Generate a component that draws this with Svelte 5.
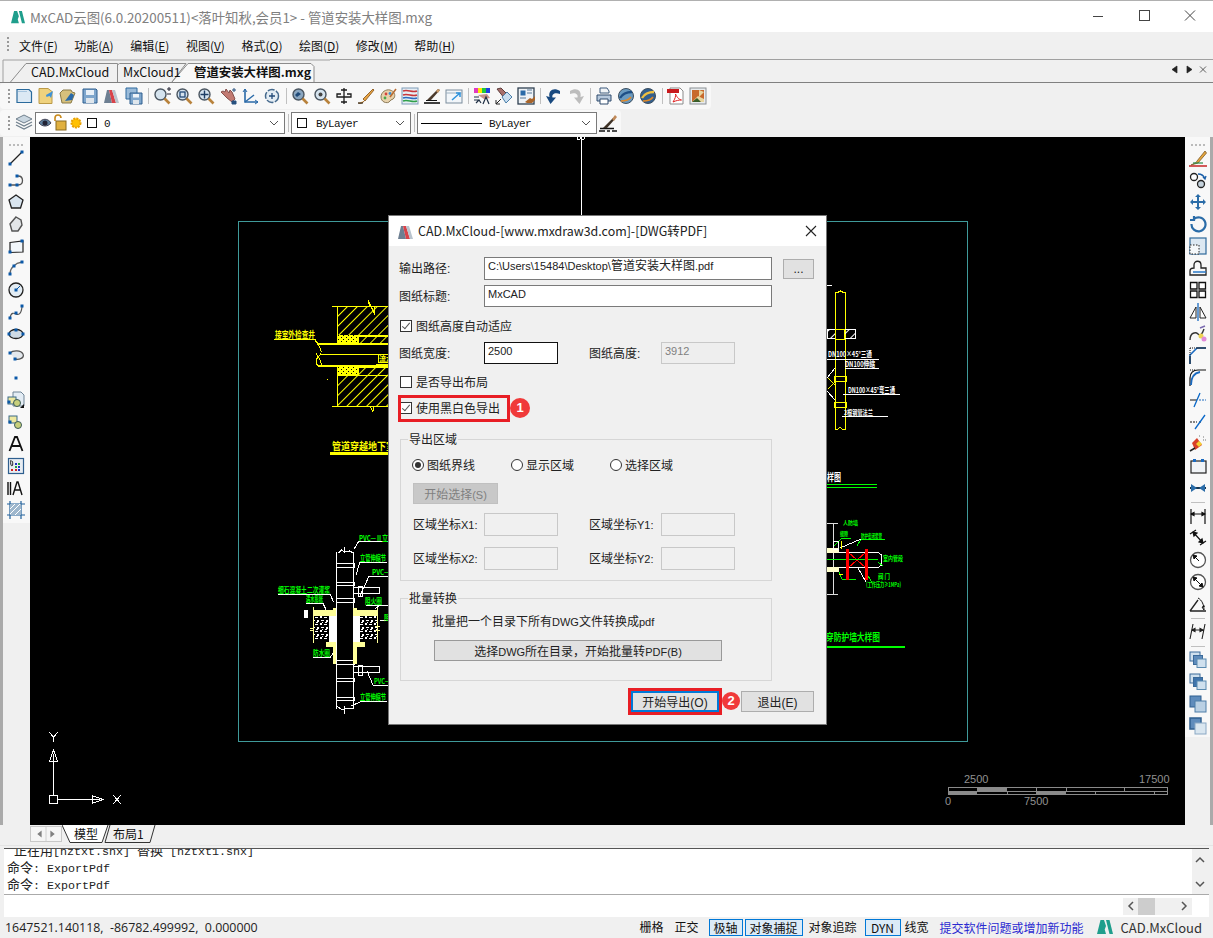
<script>
  const mag = (inner = '') => `<circle cx="7.5" cy="7.5" r="5.5" fill="#d5e3ee" stroke="#4a5560" stroke-width="1.4"/><path d="M11.5 11.5l5 5" stroke="#b8823c" stroke-width="2.6"/>${inner}`;
  const floppy = `<path d="M2 2h13l1 1v13H2z" fill="#7ea6cc" stroke="#2f5f8f"/><rect x="5" y="3" width="8" height="5" fill="#e8f0f7"/><rect x="5" y="11" width="8" height="5" fill="#dfe6ec"/>`;
  const ball = (a, b) => `<circle cx="9" cy="9" r="7.5" fill="${a}" stroke="#3d4f5f"/><path d="M3 11c3-5 8-6 12-6" stroke="${b}" stroke-width="2.4" fill="none"/><path d="M4 14c4 0 8-1 10-4" stroke="#e08a2a" stroke-width="1.6" fill="none"/>`;
  const dot = (x, y) => `<rect x="${x - 1.5}" y="${y - 1.5}" width="3" height="3" fill="#0a58a8"/>`;
  const mx = `<path d="M1 16L4 3h2l3 13z" fill="#6d7f92"/><path d="M6 3h3l4 13H9z" fill="#d8434a"/><path d="M9 3h3l4 13h-3z" fill="#b9c4ce"/>`;
  const top = [
    `<path d="M2 2.5h12l2.5 2.5v10.5H2z" fill="#dce9f4" stroke="#2a6a9c" stroke-width="1.2"/><path d="M3 4h9v1H3z" fill="#a8c6df"/>`,
    `<path d="M2 1.5h9l4 3v12H2z" fill="#efd27e" stroke="#bb9a48"/><path d="M9 8l7-4-2 7-1.5-2-3 1z" fill="#3f92d6"/>`,
    `<path d="M1 6l3-3h8l1 2 3 1-4 10H3z" fill="#d6c07c" stroke="#8a7a48"/><path d="M6 14l6-8 3 2-2 5z" fill="#2a6aa8"/>`,
    floppy, mx,
    `<path d="M1 1h11v11H1z" fill="#9abbd9" stroke="#2f6a9f"/><path d="M5 6h12v11H5z" fill="#7ea6cc" stroke="#2f5f8f"/><rect x="8" y="7" width="6" height="3.5" fill="#eef4f9"/><rect x="8" y="13" width="6" height="4" fill="#dfe6ec"/>`,
    'sep',
    mag(`<path d="M14 2h4M16 0v4M14 7h4" stroke="#223" stroke-width="1"/>`),
    mag(`<rect x="5" y="5" width="5" height="5" fill="none" stroke="#234a78" stroke-width="1.3"/>`),
    mag(`<path d="M7.5 3.5v8M3.5 7.5h8" stroke="#1d3d64" stroke-width="1.4"/>`),
    `<path d="M2 5l6 6 5 4 3-3-3-7-2-2-1 3-3-4-1 3-2-1z" fill="#c27a72" stroke="#84504c"/><path d="M15 1v4M13 3h4M13 14h4v3h-4z" stroke="#27507f" fill="#27507f"/>`,
    `<path d="M4 2v13h13" fill="none" stroke="#2a6aa8" stroke-width="1.6"/><path d="M4 15l9-7" stroke="#2a6aa8" stroke-width="1.4"/><path d="M2 5l2-3 2 3M14 13l3 2-3 2" fill="none" stroke="#2a6aa8"/>`,
    `<circle cx="9" cy="9" r="6.5" fill="#e3ecf3" stroke="#45698c" stroke-dasharray="7 1.5" stroke-width="1.5"/><path d="M6 9h6M9 6v6" stroke="#234a78" stroke-width="1.3"/>`,
    'sep',
    mag(`<path d="M4 8l3-3 3 2-4 3z" fill="#1f4a78"/>`).replace('#d5e3ee', '#8aa6c0'),
    mag(`<circle cx="7.5" cy="7.5" r="2" fill="#444"/>`),
    `<path d="M9 1v16M6 3h6M6 7H2v3h14V7h-4M6 15h6" fill="none" stroke="#1b1b1b" stroke-width="1.3"/>`,
    `<path d="M1 16c3 1 5 0 6-2M6 12L16 2l1 1L8 14z" fill="#e8a545" stroke="#8c5a20" stroke-width="0.9"/><path d="M1 16h5" stroke="#222"/>`,
    `<path d="M2 10c0-5 5-8 9-7 4 1 6 5 4 8-1 2-3 1-4 3s-4 2-6 1-3-3-3-5z" fill="#e7d2ac" stroke="#8c7a58"/><circle cx="7" cy="7" r="1.4" fill="#d6443c"/><circle cx="11" cy="6.5" r="1.4" fill="#3a8ed0"/><circle cx="6" cy="11" r="1.4" fill="#4aa84a"/><path d="M11 10l6-8" stroke="#b86a30" stroke-width="1.6"/>`,
    `<rect x="1" y="1" width="16" height="16" fill="#e6eef5" stroke="#7e9cb8"/><path d="M2 4c5-2 9 2 14 0M2 8c5-2 9 2 14 0" stroke="#c8363a" stroke-width="1.6" fill="none"/><path d="M2 11c5-2 9 2 14 0" stroke="#2a6ac0" stroke-width="1.6" fill="none"/><path d="M2 14c5-2 9 2 14 0" stroke="#2fa04a" stroke-width="1.6" fill="none"/>`,
    `<path d="M1 16h16" stroke="#111" stroke-width="1.6"/><path d="M3 13.5h11" stroke="#111"/><path d="M4 13L15 2l2 1-9 10z" fill="#4b3a2c"/><path d="M13 4l2-2 2 1-2 3z" fill="#c99a6a"/>`,
    `<rect x="1" y="3" width="16" height="13" fill="#f2f6fa" stroke="#7b8c9c"/><path d="M1 6h16" stroke="#9db0c0"/><path d="M7 13l8-7M11 6h4v4" fill="none" stroke="#2f93dc" stroke-width="1.5"/>`,
    'sep',
    `<rect x="1" y="1" width="16" height="5" fill="#e23ac0"/><rect x="5" y="1" width="4" height="5" fill="#ffe800"/><rect x="9" y="1" width="4" height="5" fill="#20c840"/><rect x="13" y="1" width="4" height="5" fill="#2040e0"/><path d="M5 8l9-1 3 4-6 1z" fill="#c99088"/><path d="M1 10h5M1 13h5M3 16l3-3 2 3M10 17l3-7 3 7" fill="none" stroke="#1f2f44" stroke-width="1.2"/>`,
    `<path d="M2 2l4-1 8 8-4 3z" fill="#a8706c" stroke="#5d3d3c"/><path d="M7 10l5-5 5 5-6 6z" fill="#c9def0" stroke="#4a7ea8"/><path d="M1 17l5-5M1 13v4h4" fill="none" stroke="#222"/>`,
    `<rect x="1" y="1" width="16" height="16" fill="#eef2f6" stroke="#2f3f50" stroke-width="1.3"/><rect x="3.5" y="3.5" width="5" height="5" fill="#2a6aa8"/><path d="M10 3h5M10 6h5M3 11h6" stroke="#5a7a9a"/><path d="M8 15l5-4 2 1 3-3v4l-3 3H10z" fill="#a8642a"/>`,
    'sep',
    `<path d="M15 4C9 0 3 3 4.500 10L1 9l4.500 8L11 10.500 7.500 10.500C6.500 7 10 5 15 7z" fill="#18497f"/>`,
    `<path d="M3 4c6-4 12-1 10.500 6L17 9l-4.500 8L7 10.500l3.500 0C11.500 7 8 5 3 7z" fill="#bdbdbd"/>`,
    'sep',
    `<path d="M5 1h7l2 3v2H5z" fill="#f0f3f6" stroke="#3d5a7c"/><path d="M2 8h14v6H2z" fill="#b6c8dc" stroke="#2f4a6c"/><path d="M5 12h8v5H5z" fill="#fff" stroke="#2f4a6c"/>`,
    ball('#6a9ac0', '#1e4f86'),
    ball('#335f8e', '#f0c040'),
    'sep',
    `<path d="M3 1h10l3 3v13H3z" fill="#fff" stroke="#8a8a8a"/><rect x="0" y="2" width="12" height="4" fill="#c8181c"/><path d="M6 15c2-3 3-6 2.5-8 2 4 3 5 6 6-3 0-5 .5-8.500 2z" fill="none" stroke="#e02020"/>`,
    `<rect x="1" y="1" width="16" height="16" fill="#e8ecef" stroke="#8a8f94"/><rect x="3" y="3" width="12" height="12" fill="#c86a2c"/><path d="M3 15l6-6 6 3v3zM10 3l5 2-5 5z" fill="#e8d6a0"/><path d="M3 15l5-4 4 4z" fill="#3a5f2a"/>`
  ];
  const left = [
    `<path d="M3 15L15 3" stroke="#222" stroke-width="1.2"/>${dot(3, 15)}${dot(15, 3)}`,
    `<path d="M3 14h8c6 0 6-9 0-9" fill="none" stroke="#555" stroke-width="1.3"/>${dot(3, 14)}${dot(10, 14)}${dot(10, 5)}`,
    `<path d="M9 2l7 5-2.500 8h-9L2 7z" fill="#d9e5ef" stroke="#222" stroke-width="1.3"/>`,
    `<path d="M9 2l5 3 1 5-4 6H5L3 9z" fill="#e3e6e8" stroke="#555" stroke-width="1.4"/>`,
    `<path d="M3 5.500l13-1.500v11l-13 .5z" fill="#f2f6fa" stroke="#222" stroke-width="1.2"/>${dot(3, 15)}${dot(15, 4)}`,
    `<path d="M3 15c0-6 5-11 12-12" fill="none" stroke="#666" stroke-width="1.3"/>${dot(3, 15)}${dot(7, 7)}${dot(15, 3)}`,
    `<circle cx="9" cy="9" r="7" fill="#e3ecf3" stroke="#222" stroke-width="1.3"/><path d="M9 9l4-4" stroke="#0a58a8"/>${dot(9, 9)}`,
    `<path d="M3 15c1-6 4-5 6-4s5 1 6-7" fill="none" stroke="#555" stroke-width="1.2"/>${dot(3, 15)}${dot(9, 10)}${dot(15, 3)}`,
    `<ellipse cx="9" cy="9" rx="7" ry="4.500" fill="#cfdbe5" stroke="#222" stroke-width="1.3"/>${dot(2, 9)}${dot(16, 9)}${dot(9, 5)}`,
    `<path d="M3 6c3-3 11-3 13 1s-4 6-8 5" fill="#e3e8ed" stroke="#555" stroke-width="1.3"/>${dot(3, 6)}${dot(8, 12)}`,
    `${dot(9, 9)}`,
    `<path d="M6 1h8l3 3v11H6z" fill="#e3ecf4" stroke="#6f8496"/><rect x="1" y="6" width="8" height="7" fill="#eee9a0" stroke="#3a6a88"/><circle cx="10" cy="12" r="3.500" fill="#c8d07c" stroke="#3a5a58"/><path d="M13 17h4v-4z" fill="#111"/>${dot(2, 11)}`,
    `<rect x="2" y="3" width="8" height="7" fill="#eee9a0" stroke="#3a6a88"/><circle cx="11" cy="12" r="3.500" fill="#c8d07c" stroke="#3a5a58"/>${dot(3, 9)}`,
    `<path d="M2.500 16L8 2h2l5.500 14M5 11h8" fill="none" stroke="#111" stroke-width="1.8"/>`,
    `<rect x="1.500" y="1.500" width="15" height="15" fill="#e8edf2" stroke="#2f5f8f" stroke-width="1.2"/><path d="M4 3c-1 3 0 6 1 6s1-4 0-5" fill="none" stroke="#222"/><rect x="8" y="6" width="2" height="2" fill="#2030c0"/><rect x="11" y="6" width="2" height="2" fill="#20a040"/><rect x="8" y="9" width="2" height="2" fill="#20a040"/><rect x="11" y="9" width="2" height="2" fill="#2030c0"/><rect x="4" y="12" width="2" height="2" fill="#d02020"/><rect x="8" y="12" width="2" height="2" fill="#d02020"/><rect x="11" y="12" width="2" height="2" fill="#2030c0"/>`,
    `<path d="M1 3v13M3.500 3v13M6 16l4-13h1l4 13M8 11h6" fill="none" stroke="#111" stroke-width="1.400"/>`,
    `<path d="M3 0v18M14 0v18M0 3h18M0 14h18" stroke="#1f5f9a" stroke-width="1.200"/><rect x="3" y="3" width="11" height="11" fill="#9db6cc"/><path d="M3 8l5-5M3 13l10-10M8 14l6-6" stroke="#fff"/>`
  ];
  const dash = (x1, y1, x2, y2) => `<path d="M${x1} ${y1}L${x2} ${y2}" stroke="#0a68c8" stroke-width="1.300"/>`;
  const stack = (a, b, c) => `<rect x="1" y="1" width="10" height="9" fill="${a}" stroke="#3a6a9a"/><rect x="4.500" y="4.500" width="9" height="9" fill="${b}" stroke="#3a6a9a"/><rect x="8" y="8" width="9" height="8.500" fill="${c}" stroke="#5a8ab0"/>`;
  const right = [
    `<path d="M2 16c4-2 5-2 6-4L16 2l1.500 2L9 14z" fill="#e6a63c" stroke="#7a5a2a" stroke-width="0.800"/><path d="M0 17h18" stroke="#c83030" stroke-width="1.600"/><path d="M4 14h10" stroke="#2a8a4a" stroke-width="1.200"/>`,
    `<circle cx="5" cy="6" r="3.500" fill="#fff" stroke="#222" stroke-width="1.300"/><circle cx="12" cy="13" r="3.500" fill="#c5d2dc" stroke="#222" stroke-width="1.300"/><path d="M9 3c4 0 6 2 7 5M14 6l2 2 1-3" fill="none" stroke="#1a5fa8" stroke-width="1.300"/>`,
    `<path d="M9 1l3 3h-2v4h4V6l3 3-3 3v-2h-4v4h2l-3 3-3-3h2v-4H4v2L1 9l3-3v2h4V4H6z" fill="#2a6ca8"/>`,
    `<path d="M5 4a7 7 0 1 1-2.500 5M5 1v4H1" fill="none" stroke="#2a6ca8" stroke-width="2.200"/>`,
    `<rect x="1" y="1" width="16" height="16" fill="#dce8f2" stroke="#2f6a9c" stroke-width="1.200"/><rect x="1" y="8" width="9" height="9" fill="#f5f8fa" stroke="#222" stroke-dasharray="1.500 1.500"/>`,
    `<path d="M1 16v-4c0-3 3-3 4-3V6c0-5 7-5 7 0v3h5v7z" fill="none" stroke="#222" stroke-width="1.300"/><path d="M4 13h13" stroke="#2a7ac8" stroke-width="1.500"/>`,
    `<path d="M1.500 1.500h6.500v6.500H1.500zM10 1.500h6.500v6.500H10zM1.500 10h6.500v6.500H1.500zM10 10h6.500v6.500H10z" fill="#fff" stroke="#111" stroke-width="1.300"/>`,
    `<path d="M9 0v18" stroke="#1a6ac0" stroke-width="1.300"/><path d="M7 4v11H1zM11 4v11h6z" fill="#fff" stroke="#222"/>`,
    `<path d="M1 15c0-8 6-8 8-6s4 1 6-5" fill="none" stroke="#333" stroke-width="1.400"/><circle cx="12" cy="11" r="2.500" fill="#ecd250"/><circle cx="15" cy="14" r="2.500" fill="#e08ad8"/><path d="M11 3l5-2" stroke="#7a6ab0" stroke-width="1.400"/>`,
    `<path d="M1 17V8l7-7h9" fill="none" stroke="#1a6ac0" stroke-width="1.600"/><path d="M1 1h7M1 1v7" stroke="#111" stroke-dasharray="1 1"/><path d="M1 17v-8" stroke="#111"/><path d="M8 1h9" stroke="#111"/>`,
    `<path d="M1 17V9c0-5 3-8 8-8h8" fill="none" stroke="#111" stroke-width="1.200"/><path d="M2 16c0-8 3-12 9-13" fill="none" stroke="#1a6ac0" stroke-width="1.800"/><path d="M1 1h6" stroke="#111" stroke-dasharray="1 1"/>`,
    `<path d="M1 9h7" stroke="#111"/>${dash(5, 16, 11, 2)}<path d="M10 9h7" stroke="#1a6ac0" stroke-dasharray="2 1"/>`,
    `<path d="M1 9h7M10 9h3" stroke="#111" stroke-dasharray="2 1"/>${dash(6, 16, 16, 2)}`,
    `<path d="M3 8l5-5 5 7-7 5z" fill="#d8402a"/><path d="M7 9l3-3 3 3-3 3z" fill="#f4d030"/><path d="M10 1h2M14 2h2M14 5h3" stroke="#777" stroke-dasharray="1 1"/><path d="M1 16l5-3" stroke="#222" stroke-width="1.500"/>`,
    `<rect x="2" y="4" width="15" height="12" fill="#f0f3f6" stroke="#222" stroke-width="1.200"/><rect x="4" y="2" width="3" height="3" fill="#1a6ac0"/><rect x="12" y="2" width="3" height="3" fill="#1a6ac0"/>`,
    `<path d="M1 9h16" stroke="#16354f" stroke-width="2"/><path d="M8 9L2 5v8zM10 9l6-4v8z" fill="#2a6ca8"/>`,
    'sep',
    `<path d="M2 2v15M16 2v15M2 7h14M2 7l3-1.500v3zM16 7l-3-1.500v3z" fill="#111" stroke="#111" stroke-width="1.200"/>`,
    `<path d="M1 5l6-4M11 16l6-4M4 3l10 11M4 3l1 4 3-3zM14 14l-1-4-3 3z" fill="#111" stroke="#111" stroke-width="1.200"/>`,
    `<circle cx="9" cy="9" r="7.500" fill="#fff" stroke="#555" stroke-width="1.300"/><path d="M4 4l6 6M4 4l1 4 3-3z" fill="#111" stroke="#111"/>`,
    `<circle cx="9" cy="9" r="7.500" fill="#fff" stroke="#555" stroke-width="1.300"/><path d="M4 4l10 10M4 4l1 4 3-3zM14 14l-1-4-3 3z" fill="#111" stroke="#111"/>`,
    `<path d="M1 16h16M1 16L9 5" fill="none" stroke="#222" stroke-width="1.300"/><path d="M9 3c4 2 6 7 6 12M15 15l-2-3 3-1" fill="none" stroke="#111"/>`,
    'sep',
    `<path d="M4 1L1 16M16 1l-3 15M3 7h11M3 7l3-1.500v3zM14 7l-3-1.500v3z" fill="#111" stroke="#222" stroke-width="1.100"/>`,
    'sep',
    stack('#cfe0ee', '#5f8cbc', '#cfe0ee'),
    stack('#cfe0ee', '#3f74ac', '#cfe0ee'),
    `<rect x="1" y="1" width="11" height="11" fill="#5f8cbc" stroke="#2f5f8f"/><rect x="6" y="6" width="11" height="11" fill="#b9d0e4" stroke="#4f7ea8"/>`,
    `<rect x="1" y="1" width="11" height="11" fill="#5f8cbc" stroke="#2f5f8f" stroke-width="1.500"/><rect x="6" y="6" width="11" height="11" fill="#d9e6f0" stroke="#8aa8c4"/>`
  ];
  const layerIcons = {
    layers: `<path d="M9 1l8 4-8 4-8-4z" fill="#c9d6e0" stroke="#6f7f8c"/><path d="M1 8l8 4 8-4M1 11l8 4 8-4" fill="none" stroke="#6f7f8c" stroke-width="1.200"/>`,
    brush: `<path d="M0 17h6M8 17h3M13 17h5M1 14.500h14" stroke="#111" stroke-width="1.300"/><path d="M4 14L14 4l2 1-8 9z" fill="#3f3226"/><path d="M13 5l3-4 2 2-3 4z" fill="#c08a5a"/>`
  };
  const logoPath = 'M0 15L3.500 1h3.500l2 6-3 8zM9 1h3.500L16 15h-3.500zM7 8l2 7H6z';
  const menus = [['文件', 'F'], ['功能', 'A'], ['编辑', 'E'], ['视图', 'V'], ['格式', 'O'], ['绘图', 'D'], ['修改', 'M'], ['帮助', 'H']];
  const status = [
    { t: '栅格', w: 34, m: 0 }, { t: '正交', w: 34, m: 1 }, { t: '极轴', w: 34, m: 5, on: true },
    { t: '对象捕捉', w: 58, m: 2, on: true }, { t: '对象追踪', w: 52, m: 4 }, { t: 'DYN', w: 36, m: 6, on: true }, { t: '线宽', w: 32, m: 0 }
  ];
  const cream = '#ffff99';
  const labels = [
    { c: 'cy', x: 275, y: 338, l: 40, s: 9, t: '接室外检查井' },
    { c: 'cy', x: 379, y: 362, l: 14, s: 8, t: '流水' },
    { c: 'cy', x: 332, y: 450, l: 63, s: 10, t: '管道穿越地下室' },
    { c: 'cg', x: 359, y: 541, l: 35, s: 7.5, t: 'PVC—Ⅱ立管' },
    { c: 'cg', x: 360, y: 561, l: 26, s: 8, t: '立管伸缩节' },
    { c: 'cg', x: 372, y: 575, l: 24, s: 7.5, t: 'PVC—Ⅱ' },
    { c: 'cg', x: 278, y: 593, l: 52, s: 7.5, t: '细石混凝土二次灌浆' },
    { c: 'cg', x: 306, y: 602, l: 17, s: 7.5, t: '遇水膨胀' },
    { c: 'cg', x: 365, y: 604, l: 17, s: 8, t: '阻火圈' },
    { c: 'cg', x: 384, y: 620, l: 6, s: 7, t: '阻' },
    { c: 'cg', x: 313, y: 656, l: 17, s: 8, t: '防水圈' },
    { c: 'cg', x: 374, y: 684, l: 16, s: 7, t: 'PVC—' },
    { c: 'cg', x: 360, y: 700, l: 26, s: 8, t: '立管伸缩节' },
    { c: 'cw', x: 828, y: 357, l: 44, s: 7.5, t: 'DN100×45°三通' },
    { c: 'cw', x: 845, y: 367, l: 30, s: 7.5, t: 'DN100伸缩' },
    { c: 'cw', x: 848, y: 393, l: 47, s: 8, t: 'DN100×45°弯三通' },
    { c: 'cw', x: 844, y: 415, l: 29, s: 6.5, t: '2根钢管法兰' },
    { c: 'cw', x: 827, y: 481, l: 14, s: 10, t: '样图' },
    { c: 'cg', x: 843, y: 525, l: 15, s: 6, t: '人防墙' },
    { c: 'cg', x: 840, y: 536, l: 8, s: 6, t: '缝隙' },
    { c: 'cg', x: 861, y: 538, l: 21, s: 6, t: '防护密闭套管' },
    { c: 'cg', x: 883, y: 561, l: 20, s: 7, t: '室内管段' },
    { c: 'cg', x: 878, y: 579, l: 12, s: 7, t: '阀 门' },
    { c: 'cg', x: 866, y: 587, l: 35, s: 6.5, t: '(工作压力≥1MPa)' },
    { c: 'cg', x: 826, y: 641, l: 54, s: 10, t: '穿防护墙大样图' }
  ];
</script>

<div class="win">
  <header class="titlebar">
    <svg class="logo" viewBox="0 0 16 16"><path d={logoPath} fill="#1f9e8c"/></svg>
    <span class="apptitle">MxCAD云图(6.0.20200511)&lt;落叶知秋,会员1&gt; - 管道安装大样图.mxg</span>
    <div class="winbtns">
      <svg viewBox="0 0 46 31"><path d="M18 15.500h10" stroke="#444"/></svg>
      <svg viewBox="0 0 46 31"><rect x="18.500" y="9.500" width="10" height="10" fill="none" stroke="#444"/></svg>
      <svg viewBox="0 0 46 31"><path d="M18 9.500l10 10M28 9.500l-10 10" stroke="#444"/></svg>
    </div>
  </header>

  <nav class="menubar">
    <span class="grip"></span>
    {#each menus as m}
      <span class="menu">{m[0]}(<u>{m[1]}</u>)</span>
    {/each}
  </nav>

  <div class="tabstrip">
    <svg class="tabshape" viewBox="0 0 330 24">
      <path d="M3 24V2H330" fill="none" stroke="#a0a0a0"/>
      <path d="M10.500 24L26 5.500H117.500V24" fill="#f0f0f0" stroke="#8c8c8c"/>
      <path d="M117.500 24V7l2-1.500H186L172 24" fill="#f0f0f0" stroke="#8c8c8c"/>
      <path d="M172 24L188 5.500H311l3 3V24" fill="#f8f8f8" stroke="#8c8c8c"/>
    </svg>
    <span class="tabtop"></span>
    <span class="tab t1">CAD.MxCloud</span>
    <span class="tab t2">MxCloud1</span>
    <span class="tab t3">管道安装大样图.mxg</span>
    <div class="tabnav">
      <svg viewBox="0 0 42 12"><path d="M9 2v7L4 5.500zM19 2v7l5-3.500zM32 2.500l6 6M38 2.500l-6 6" fill="#222" stroke="#222" stroke-width="0.700"/></svg>
    </div>
  </div>

  <div class="toolrow r1">
    <div class="bar">
      <span class="grip small"></span>
      {#each top as ic}
        {#if ic === 'sep'}<span class="vsep"></span>{:else}<svg class="ico" viewBox="0 0 18 18">{@html ic}</svg>{/if}
      {/each}
    </div>
  </div>
  <div class="toolrow r2">
    <div class="bar bar2">
      <span class="grip small"></span>
      <svg class="ico" viewBox="0 0 18 18">{@html layerIcons.layers}</svg>
      <div class="combo layer">
        <svg class="eye" viewBox="0 0 60 18">
          <path d="M1 9c3-5 9-5 12 0-3 4-9 4-12 0z" fill="#5d7f9c" stroke="#445"/><circle cx="7" cy="9" r="2.500" fill="#223"/>
          <path d="M17 7V4c0-4 6-4 6 0" fill="none" stroke="#c98a1c" stroke-width="1.600"/><rect x="18" y="7" width="10" height="9" fill="#e0b040" stroke="#8a6a20"/>
          <circle cx="38" cy="9" r="4.500" fill="#ffc000" stroke="#e8a000" stroke-width="2" stroke-dasharray="2 1"/>
          <rect x="49.500" y="4.500" width="9" height="9" fill="#fff" stroke="#111"/>
        </svg>
        <span class="combotext">0</span>
        <svg class="chev" viewBox="0 0 10 6"><path d="M1 1l4 4 4-4" fill="none" stroke="#555"/></svg>
      </div>
      <span class="vsep s2"></span>
      <div class="combo bylayer">
        <svg class="sw" viewBox="0 0 10 10"><rect x=".5" y=".5" width="9" height="9" fill="#fff" stroke="#111"/></svg>
        <span class="combotext">ByLayer</span>
        <svg class="chev" viewBox="0 0 10 6"><path d="M1 1l4 4 4-4" fill="none" stroke="#555"/></svg>
      </div>
      <span class="vsep s2"></span>
      <div class="combo linetype">
        <span class="ln"></span>
        <span class="combotext">ByLayer</span>
        <svg class="chev" viewBox="0 0 10 6"><path d="M1 1l4 4 4-4" fill="none" stroke="#555"/></svg>
      </div>
      <svg class="ico" viewBox="0 0 18 18">{@html layerIcons.brush}</svg>
    </div>
  </div>

  <div class="workarea">
    <aside class="vbar vleft">
      <span class="hgrip"></span>
      {#each left as ic}<svg class="ico" viewBox="0 0 18 18">{@html ic}</svg>{/each}
    </aside>

    <main class="canvas">
      <svg class="cad" viewBox="30 137 1155 688" aria-hidden="true">
        <defs>
          <pattern id="hy" width="7" height="7" patternUnits="userSpaceOnUse" patternTransform="rotate(45)"><path d="M0 0V7" stroke="#ff0" stroke-width="1.200"/></pattern>
          <pattern id="hw" width="7" height="7" patternUnits="userSpaceOnUse" patternTransform="rotate(45)"><path d="M0 0V7" stroke="#fff" stroke-width="1.200"/></pattern>
          <pattern id="speck" width="9" height="7" patternUnits="userSpaceOnUse"><path d="M0 1h3v1H0zM5 0h2v2H5zM2 4h2v2H2zM6 4h3v1H6zM1 6h2v1H1zM7 6h1v1H7z" fill="#fff"/></pattern>
          <pattern id="ydot" width="5" height="4" patternUnits="userSpaceOnUse"><rect width="5" height="4" fill="#ff0"/><rect x="1" y="1" width="1" height="1"/><rect x="3" y="3" width="1" height="1"/></pattern>
        </defs>
        <rect x="238.500" y="221.500" width="729" height="520" fill="none" stroke="#3f9a9a"/>
        <path d="M581.500 137v80" stroke="#fff"/>
        <circle cx="579" cy="138" r="1.500" fill="none" stroke="#fff"/><circle cx="583" cy="138" r="1.500" fill="none" stroke="#fff"/>

        <!-- upper-left section -->
        <g fill="none" stroke="#ff0">
          <path d="M332 306.500h38l-2-6 7 14-1 -8h15M332 406.500h38l3 5 1-5h15" />
          <rect x="337.500" y="306.500" width="52" height="29" fill="url(#hy)"/>
          <rect x="337.500" y="375.500" width="52" height="31" fill="url(#hy)"/>
          <rect x="358" y="336" width="32" height="8" fill="url(#hy)"/>
          <rect x="358" y="367" width="32" height="8" fill="url(#hy)"/>
          <rect x="337" y="335" width="21" height="9" fill="url(#ydot)" stroke="none"/>
          <rect x="337" y="367" width="21" height="8" fill="url(#ydot)" stroke="none"/>
          <path d="M318 343.500h72" stroke-width="2"/><path d="M318 365.500h72" stroke-width="2"/><path d="M320 354.500h70"/>
          <path d="M315 340c4 6 7 9 6 13s-5 4-5 8 4 8 5 4-3-8-5-12" />
          <path d="M274 339.500h41l3 4"/>
          <path d="M378 354v8h12M376 364h14" />
          <path d="M330 453.500h60" stroke-width="2.500"/>
        </g>
        <rect x="327" y="379" width="1" height="1" fill="#ff0"/>

        <!-- lower-left section -->
        <g fill="none" stroke="#fff">
          <path d="M336.500 552v157M353.500 552v157M338.500 553l3-3 3 2 5-1 4 2M337 706l5 4 5-2 7 1" />
          <path d="M336 563.500h18v4h-18zM336 582.500h18v3h-18zM336 598.500h18v4h-18zM336 660.500h18v4h-18zM336 678.500h18v3h-18zM336 697.500h18v3h-18z"/>
          <path d="M344 547v6M344 706v8M353 587.500h26v6h-26M358 586h4v10h-4zM353 666.500h26v6h-26M358 665h4v10h-4z"/>
        </g>
        <rect x="313" y="610" width="22" height="6" fill={cream}/><rect x="354" y="610" width="24" height="6" fill={cream}/>
        <rect x="333" y="608" width="3" height="56" fill={cream}/><rect x="353" y="608" width="4" height="56" fill={cream}/>
        <rect x="326" y="642" width="10" height="5" fill={cream}/><rect x="353" y="642" width="12" height="5" fill={cream}/>
        <rect x="329" y="616" width="7" height="26" fill="#fff"/><rect x="353" y="616" width="7" height="26" fill="#fff"/>
        <rect x="313" y="616" width="16" height="25" fill="url(#speck)"/><rect x="360" y="616" width="18" height="25" fill="url(#speck)"/>
        <rect x="304" y="610" width="4" height="8" fill="#fff"/>
        <path d="M313.500 607v36M377.500 607v36" stroke="#ff9" fill="none"/>
        <path d="M310 629l4-1M310 630l4 1M375 627l5-1M375 630l5 1" stroke="#ff9" fill="none"/>
        <g fill="none" stroke="#fff">
          <path d="M354 549l5-8h30M356 575l4-13h27M360 596l9-20h20M277.500 594.500h53l3 8M306 603.500h17l3 6M366 605.500h22l-8 0-5 3M380 620h9M313 657.500h17l3-4M367 671l6 14h16M360 701.500h27l-6 0M351 706l9-4"/>
        </g>

        <!-- upper-right section -->
        <g fill="none" stroke="#ff0">
          <path d="M835.500 292h3l2-1 2 1h2.500v137h-3l-2-2-2 2h-2.500z"/>
          <path d="M834 376.500h12v5h-12zM834 402.500h12v5h-12z"/>
          <path d="M828 389l7-7M828 378l7 7" />
        </g>
        <rect x="827" y="329.500" width="28" height="9" fill="url(#hw)" stroke="#fff"/>
        <rect x="835.500" y="329" width="9" height="10" fill="#000" stroke="#ff0"/>
        <path d="M827 285h5M827 359.500h52M845 368.500h34M843 394.500h57M842 416.500h46M827 378l8-10M827 391l8 9" stroke="#fff" fill="none"/>
        <path d="M827 484.500h50M827 487.500h50" stroke="#0f0" fill="none"/>

        <!-- lower-right section -->
        <path d="M827 523.500h11M833.500 524v70M827 594.500h11" stroke="#ddd" fill="none"/>
        <path d="M827 552.500h51l3 2v11l-3 2h-51" stroke="#fff" fill="none"/>
        <path d="M866 552l-18 16M848 552l18 16" stroke="#f00" fill="none"/>
        <path d="M827 559.500h51M883 566l-5-4M834 546l8-8h9M838 570l4 9h14M860 539.500h25M857 546l4-7M866 572l6 11" stroke="#0f0" fill="none"/>
        <path d="M840 548l21-9M858 568l8 14" stroke="#fff" fill="none"/>
        <rect x="846" y="549" width="3" height="31" fill="#f00"/><rect x="865" y="549" width="3" height="31" fill="#f00"/>
        <rect x="827" y="548" width="12" height="5" fill="#ffc"/><rect x="827" y="567" width="12" height="5" fill="#ffc"/>
        <rect x="833" y="541" width="5" height="8" fill="none" stroke="#fff"/>
        <path d="M841 541v8M839 574h4" stroke="#ff0"/>
        <path d="M827 646.500h78" stroke="#0f0" stroke-width="2" fill="none"/>

        {#each labels as b}
          <text class={b.c} x={b.x} y={b.y} font-size={b.s} textLength={b.l} lengthAdjust="spacingAndGlyphs">{b.t}</text>
        {/each}

        <!-- UCS -->
        <g fill="none" stroke="#fff">
          <rect x="49.500" y="795.500" width="8" height="8"/>
          <path d="M53.500 795V757M53.500 750l-4 11h8zM53.500 754v7M58 799.500h35M103 799.500l-11-4v8zM92 799.500h8"/>
          <path d="M49 732l4.500 5 4.500-5M53.500 737v5M113 795l8 9M121 795l-8 9"/>
        </g>

        <!-- scale -->
        <g fill="none" stroke="#8a8a8a">
          <rect x="948.500" y="787.500" width="219" height="7"/>
          <path d="M948 791h220M977 787v4M1007 791v4M1036 787v8M1066 787v4M1095 791v4M1124 787v4M1154 791v4" />
        </g>
        <rect x="977" y="787" width="30" height="4" fill="#8a8a8a"/><rect x="948" y="791" width="29" height="4" fill="#8a8a8a"/><rect x="1036" y="791" width="30" height="4" fill="#8a8a8a"/>
        <g class="cgray">
          <text x="964" y="783">2500</text><text x="1139" y="783">17500</text>
          <text x="945" y="805">0</text><text x="1024" y="805">7500</text>
        </g>
      </svg>

      <section class="dialog">
        <div class="dtitle">
          <svg class="dlogo" viewBox="0 0 16 16">{@html mx}</svg>
          <span>CAD.MxCloud-[www.mxdraw3d.com]-[DWG转PDF]</span>
          <svg class="dclose" viewBox="0 0 12 12"><path d="M1 1l10 10M11 1L1 11" stroke="#222" stroke-width="1.100"/></svg>
        </div>
        <div class="dbody">
          <div class="row r-path">
            <span class="lbl w85">输出路径:</span>
            <div class="input wide">C:\Users\15484\Desktop\<span class="zh12">管道安装大样图</span>.pdf</div>
            <button class="btn more">...</button>
          </div>
          <div class="row r-title">
            <span class="lbl w85">图纸标题:</span>
            <div class="input wide tall22">MxCAD</div>
          </div>
          <div class="check c1"><span class="box on"></span><span class="ct">图纸高度自动适应</span></div>
          <div class="row r-size">
            <span class="lbl w85">图纸宽度:</span>
            <div class="input w74 focus">2500</div>
            <span class="lbl lblgap">图纸高度:</span>
            <div class="input w74 dis">3912</div>
          </div>
          <div class="check c2"><span class="box"></span><span class="ct">是否导出布局</span></div>
          <div class="check c3">
            <span class="box on"></span><span class="ct">使用黑白色导出</span>
            <span class="redbox rb1"></span>
            <span class="badge b1">1</span>
          </div>

          <div class="group g1">
            <span class="legend">导出区域</span>
            <div class="radios">
              <span class="radio"><span class="rd on"></span><span class="ct">图纸界线</span></span>
              <span class="radio"><span class="rd"></span><span class="ct">显示区域</span></span>
              <span class="radio"><span class="rd"></span><span class="ct">选择区域</span></span>
            </div>
            <button class="btn pick" disabled>开始选择<span class="lat">(S)</span></button>
            <div class="row coord c-a">
              <span class="lbl lx">区域坐标<span class="lat">X1:</span></span><div class="input w74 dim"></div>
              <span class="lbl ly">区域坐标<span class="lat">Y1:</span></span><div class="input w74 dim"></div>
            </div>
            <div class="row coord c-b">
              <span class="lbl lx">区域坐标<span class="lat">X2:</span></span><div class="input w74 dim"></div>
              <span class="lbl ly">区域坐标<span class="lat">Y2:</span></span><div class="input w74 dim"></div>
            </div>
          </div>

          <div class="group g2">
            <span class="legend">批量转换</span>
            <p class="hint">批量把一个目录下所有<span class="lat">DWG</span>文件转换成<span class="lat">pdf</span></p>
            <button class="btn batch">选择<span class="lat">DWG</span>所在目录，开始批量转<span class="lat">PDF(B)</span></button>
          </div>

          <div class="actions">
            <span class="startwrap">
              <button class="btn start">开始导出(O)</button>
              <span class="badge b2">2</span>
            </span>
            <button class="btn quit">退出(E)</button>
          </div>
        </div>
      </section>
    </main>

    <aside class="vbar vright">
      <span class="hgrip"></span>
      {#each right as ic}
        {#if ic === 'sep'}<span class="hsep"></span>{:else}<svg class="ico" viewBox="0 0 18 18">{@html ic}</svg>{/if}
      {/each}
    </aside>
  </div>

  <div class="sheetbar">
    <div class="sheetnav">
      <svg viewBox="0 0 32 16"><path d="M11 4v8l-5-4zM21 4v8l5-4z" fill="#808080"/><path d="M16 0v16" stroke="#ccc"/></svg>
    </div>
    <svg class="sheetshape" viewBox="0 0 100 18">
      <path d="M0 0l8 17.500h32L46 0z" fill="#fff"/>
      <path d="M0 0l8 17.500h32L46 0M43 17.500L48 0M88 17.500L93 0M43 17.500h45" fill="none" stroke="#333"/>
    </svg>
    <span class="sheet s-a">模型</span>
    <span class="sheet s-b">布局1</span>
  </div>

  <div class="cmd">
    <div class="cmdlog">
      <div class="clip">
        <div class="cl first"><span class="zh">正在用</span>[hztxt.shx] <span class="zh">替换</span> [hztxt1.shx]</div>
        <div class="cl"><span class="zh">命令</span>: ExportPdf</div>
        <div class="cl"><span class="zh">命令</span>: ExportPdf</div>
      </div>
      <div class="vscroll">
        <svg viewBox="0 0 16 45"><path d="M4 13l4-4 4 4M4 33l4 4 4-4" fill="none" stroke="#555" stroke-width="1.500"/></svg>
      </div>
    </div>
    <div class="cmdinput">
      <div class="hscroll">
        <svg class="harrow" viewBox="0 0 10 12"><path d="M7 2L3 6l4 4" fill="none" stroke="#555" stroke-width="1.500"/></svg>
        <span class="thumb"></span>
        <svg class="harrow end" viewBox="0 0 10 12"><path d="M3 2l4 4-4 4" fill="none" stroke="#555" stroke-width="1.500"/></svg>
      </div>
    </div>
  </div>

  <footer class="statusbar">
    <span class="coords">1647521.140118, &nbsp;-86782.499992, &nbsp;0.000000</span>
    <div class="stitems">
      {#each status as s}
        <span class="st" class:on={s.on} style="width:{s.w}px;margin-left:{s.m}px">{s.t}</span>
      {/each}
      <a class="link" href="#top">提交软件问题或增加新功能</a>
      <svg class="slogo" viewBox="0 0 16 16"><path d={logoPath} fill="#1f9e8c"/></svg>
      <span class="brand">CAD.MxCloud</span>
    </div>
  </footer>
</div>

<style>
  :global(body) { margin: 0; background: #f0f0f0; }
  .win {
    width: 1213px; height: 938px; overflow: hidden; display: flex; flex-direction: column;
    background: #f0f0f0; box-sizing: border-box; border-top: 1px solid #b0b0b0;
    font: 12px "Noto Sans CJK SC", "Noto Sans", sans-serif; color: #111;
  }
  svg { display: block; flex: none; }
  .titlebar { height: 31px; background: #fff; display: flex; align-items: center; flex: none; }
  .logo { width: 14px; height: 14px; margin-left: 11px; }
  .apptitle { margin-left: 5px; color: #808080; font-size: 13.400px; }
  .winbtns { margin-left: auto; display: flex; }
  .winbtns svg { width: 46px; height: 31px; }
  .menubar { height: 26px; display: flex; align-items: center; flex: none; background: #f0f0f0; }
  .grip { width: 2px; height: 16px; margin: 0 0 0 7px; background: repeating-linear-gradient(#999 0 2px, transparent 2px 4px); flex: none; }
  .menu { margin-right: 16.500px; white-space: nowrap; }
  .menubar .grip { margin-right: 10px; }
  .tabstrip { height: 25px; position: relative; display: flex; flex: none; border-bottom: 1px solid #808080; box-sizing: border-box; }
  .tabshape { position: absolute; left: 0; top: 0; width: 330px; height: 24px; }
  .tabtop { position: absolute; left: 330px; right: 0; top: 1px; height: 1px; background: #a0a0a0; }
  .tab { position: relative; font-size: 12.500px; line-height: 24px; height: 24px; padding-top: 2px; box-sizing: border-box; white-space: nowrap; }
  .t1 { margin-left: 31px; width: 92px; }
  .t2 { width: 71px; }
  .t3 { font-weight: 700; font-size: 12.400px; }
  .tabnav { margin-left: auto; margin-right: 3px; padding-top: 6px; }
  .tabnav svg { width: 42px; height: 12px; }
  .toolrow { display: flex; flex: none; }
  .r1 { height: 27px; }
  .r2 { height: 27px; }
  .bar { display: flex; align-items: center; background: #f8f8f8; border-radius: 4px; padding: 0 2px 0 0; height: 26px; }
  .bar .ico { width: 18px; height: 18px; margin: 0 2px; }
  .grip.small { margin: 0 3px 0 8px; height: 14px; width: 2px; }
  .vsep { width: 1px; height: 16px; background: #c0c0c0; margin: 0 2.500px; flex: none; }
  .combo { height: 22px; box-sizing: border-box; border: 1px solid #7a7a7a; background: #fff; display: flex; align-items: center; position: relative; }
  .layer { width: 250px; }
  .bylayer { width: 120px; }
  .linetype { width: 180px; }
  .eye { width: 60px; height: 18px; margin-left: 2px; }
  .sw { width: 10px; height: 10px; margin-left: 5px; }
  .combotext { font: 11px/14px "Liberation Mono", monospace; letter-spacing: -0.600px; padding-top: 1px; }
  .layer .combotext { margin-left: 6px; }
  .bylayer .combotext { margin-left: 9px; }
  .ln { width: 61px; height: 1px; background: #000; margin-left: 3px; }
  .linetype .combotext { margin-left: 7px; }
  .chev { width: 10px; height: 6px; position: absolute; right: 5px; top: 7px; }
  .vsep.s2 { margin: 0 2px 0 3px; height: 18px; }
  .workarea { flex: none; height: 688px; display: flex; }
  .vbar { width: 26px; box-sizing: border-box; display: flex; flex-direction: column; align-items: center; flex: none; padding-top: 7px; }
  .vleft { width: 30px; border-left: 3px solid #aaa; padding-right: 1px; background: linear-gradient(#f8f8f8 0 386px, #f0f0f0 386px); }
  .vright { width: 28px; border-right: 3px solid #aaa; background: linear-gradient(#f8f8f8 0 600px, #f0f0f0 600px); }
  .vbar .ico { width: 18px; height: 18px; margin: 2px 0; flex: none; }
  .hgrip { width: 14px; height: 2px; margin-bottom: 1px; background: repeating-linear-gradient(90deg, #bbb 0 2px, transparent 2px 4px); }
  .hsep { width: 14px; height: 1px; background: #c0c0c0; margin: 2.500px 0; flex: none; }
  .canvas { flex: 1; background: #000; position: relative; overflow: hidden; }
  .cad { position: absolute; inset: 0; width: 100%; height: 100%; shape-rendering: crispEdges; }
  .cad text { font-family: "Noto Sans CJK SC", sans-serif; font-weight: 700; stroke: none; }
  .cy { fill: #ff0; }
  .cg { fill: #0f0; }
  .cw { fill: #fff; }
  .cgray { fill: #909090; font-size: 11px; }
  .cgray text { font-family: "Liberation Sans", sans-serif; font-weight: 400; }

  .dialog { position: absolute; left: 359px; top: 79px; width: 437px; height: 508px; background: #f0f0f0; box-shadow: 0 0 0 1px #777; font-size: 12px; color: #222; }
  .dtitle { height: 30px; background: #fff; display: flex; align-items: center; position: relative; }
  .dlogo { width: 16px; height: 16px; margin-left: 8px; }
  .dtitle span { margin-left: 5px; color: #222; font-size: 12.430px; }
  .dclose { width: 12px; height: 12px; margin-left: auto; margin-right: 9px; }
  .dbody { padding-left: 10px; position: relative; font-family: "Liberation Sans", "Noto Sans CJK SC", sans-serif; }
  .row { display: flex; align-items: center; }
  .lbl { white-space: nowrap; flex: none; padding-bottom: 2px; box-sizing: border-box; }
  .ct { padding-bottom: 1px; }
  .lat { font-size: 11px; }
  .zh12 { font-size: 12px; }
  .w85 { width: 85px; }
  .input { height: 23px; box-sizing: border-box; border: 1px solid #7a7a7a; background: #fff; line-height: 17px; padding-left: 3px; white-space: nowrap; overflow: hidden; font-size: 11px; }
  .wide { width: 288px; }
  .tall22 { height: 22px; }
  .w74 { width: 74px; }
  .focus { border-color: #111; height: 22px; }
  .dis { background: #eee; border-color: #c8c8c8; color: #808080; height: 22px; }
  .dim { background: #f0f0f0; border-color: #c8c8c8; height: 23px; }
  .r-path { margin-top: 11px; height: 23px; }
  .r-title { margin-top: 5px; height: 22px; }
  .btn { box-sizing: border-box; font: inherit; color: #222; background: #e1e1e1; border: 1px solid #adadad; padding: 0; }
  .more { width: 31px; height: 20px; margin-left: 11px; }
  .check { display: flex; align-items: center; height: 14px; position: relative; white-space: nowrap; }
  .box { width: 12px; height: 12px; box-sizing: border-box; border: 1px solid #333; background: #fff; margin: 0 4px 0 1px; position: relative; flex: none; }
  .box.on::after { content: ""; position: absolute; left: 3px; top: 0; width: 3px; height: 7px; border: solid #555; border-width: 0 1.500px 1.500px 0; transform: rotate(40deg); }
  .c1 { margin-top: 12px; }
  .r-size { margin-top: 9px; height: 22px; }
  .lblgap { margin-left: 31px; width: 72px; }
  .c2 { margin-top: 11px; }
  .c3 { margin-top: 12px; }
  .redbox { position: absolute; border: 3px solid #e81e25; box-sizing: border-box; pointer-events: none; }
  .rb1 { left: -1px; top: -6px; width: 112px; height: 27px; }
  .badge { position: absolute; width: 20px; height: 20px; border-radius: 50%; background: #f03a3a; color: #fff; text-align: center; line-height: 20px; font-size: 13px; font-weight: 700; }
  .b1 { left: 111px; top: -3px; }
  .group { position: relative; border: 1px solid #d6d6d6; width: 372px; box-sizing: border-box; margin-left: 1px; }
  .legend { position: absolute; left: 7px; top: -8px; background: #f0f0f0; padding: 0 1px; line-height: 16px; }
  .g1 { margin-top: 24px; height: 142px; }
  .g2 { margin-top: 17px; height: 83px; }
  .radios { display: flex; margin: 18px 0 0 11px; height: 14px; align-items: center; }
  .radio { display: flex; align-items: center; width: 99px; }
  .rd { width: 12px; height: 12px; box-sizing: border-box; border: 1px solid #333; border-radius: 50%; background: #fff; margin-right: 3px; position: relative; }
  .rd.on::after { content: ""; position: absolute; inset: 2px; border-radius: 50%; background: #333; }
  .pick { display: block; margin: 11px 0 0 12px; width: 85px; height: 21px; background: #c8c8c8; border-color: #c0c0c0; color: #808080; }
  .coord { height: 23px; }
  .c-a { margin-top: 9px; }
  .c-b { margin-top: 11px; }
  .lx { margin-left: 12px; width: 71px; }
  .ly { margin-left: 31px; width: 72px; }
  .hint { margin: 15px 0 0 31px; line-height: 16px; }
  .batch { display: block; margin: 10px 0 0 33px; width: 288px; height: 21px; border-color: #999; }
  .actions { display: flex; margin-top: 7px; align-items: center; }
  .startwrap { position: relative; margin-left: 229px; width: 94px; height: 27px; box-sizing: border-box; border: 3px solid #e81e25; display: flex; align-items: center; justify-content: center; }
  .start { width: 88px; height: 21px; border: 2px solid #0078d7; background: #e1e1e1; }
  .b2 { right: -21px; top: 1px; width: 18px; height: 18px; line-height: 18px; }
  .quit { width: 73px; height: 21px; margin-left: 19px; }

  .sheetbar { flex: none; height: 21px; position: relative; display: flex; padding-left: 30px; align-items: flex-start; border-bottom: 1px solid #e4e4e4; box-sizing: border-box; }
  .sheetnav { width: 32px; height: 16px; margin-top: 1px; border: 1px solid #c8c8c8; box-sizing: border-box; background: #f5f5f5; }
  .sheetnav svg { width: 30px; height: 14px; }
  .sheetshape { position: absolute; left: 62px; top: 0; width: 100px; height: 18px; }
  .sheet { position: relative; font-size: 12px; line-height: 17px; }
  .s-a { margin-left: 12px; width: 39px; }

  .cmd { flex: none; height: 69px; display: flex; flex-direction: column; padding: 2px 4px 0 4px; }
  .cmdlog { height: 45px; display: flex; background: #fff; border-top: 1px solid #555; border-bottom: 1px solid #aaa; }
  .clip { flex: 1; height: 45px; overflow: hidden; padding-left: 3px; color: #222; }
  .cl { font: 11.670px/17px "Liberation Mono", monospace; white-space: pre; height: 17px; }
  .cl.first { margin-top: -8px; padding-left: 7px; }
  .zh { font-family: "Noto Sans CJK SC", sans-serif; font-size: 13px; line-height: 17px; }
  .vscroll { width: 17px; background: #f0f0f0; }
  .vscroll svg { width: 16px; height: 45px; }
  .cmdinput { flex: 1; background: #fff; display: flex; justify-content: flex-end; padding-right: 17px; align-items: center; }
  .hscroll { width: 69px; height: 17px; background: #f0f0f0; display: flex; align-items: center; }
  .harrow { width: 10px; height: 12px; margin-left: 3px; }
  .harrow.end { margin-left: 24px; }
  .thumb { width: 17px; height: 17px; background: #cdcdcd; margin-left: 2px; }

  .statusbar { flex: none; height: 23px; display: flex; align-items: center; border-bottom: 2px solid #999; box-sizing: border-box; padding: 0 0 1px 5px; }
  .coords { font-family: "Open Sans", "Noto Sans", sans-serif; font-size: 12.400px; color: #222; white-space: nowrap; }
  .stitems { margin-left: auto; display: flex; align-items: center; }
  .st { text-align: center; height: 17px; line-height: 15px; box-sizing: border-box; white-space: nowrap; }
  .st.on { border: 1px solid #0078d7; background: #dcebf7; }
  .link { color: #2a2ad0; text-decoration: none; margin: 0 0 0 7px; width: 150px; white-space: nowrap; }
  .slogo { width: 16px; height: 16px; margin-left: 7px; }
  .brand { margin: 0 11px 0 8px; font-size: 13px; color: #333; white-space: nowrap; }
</style>
